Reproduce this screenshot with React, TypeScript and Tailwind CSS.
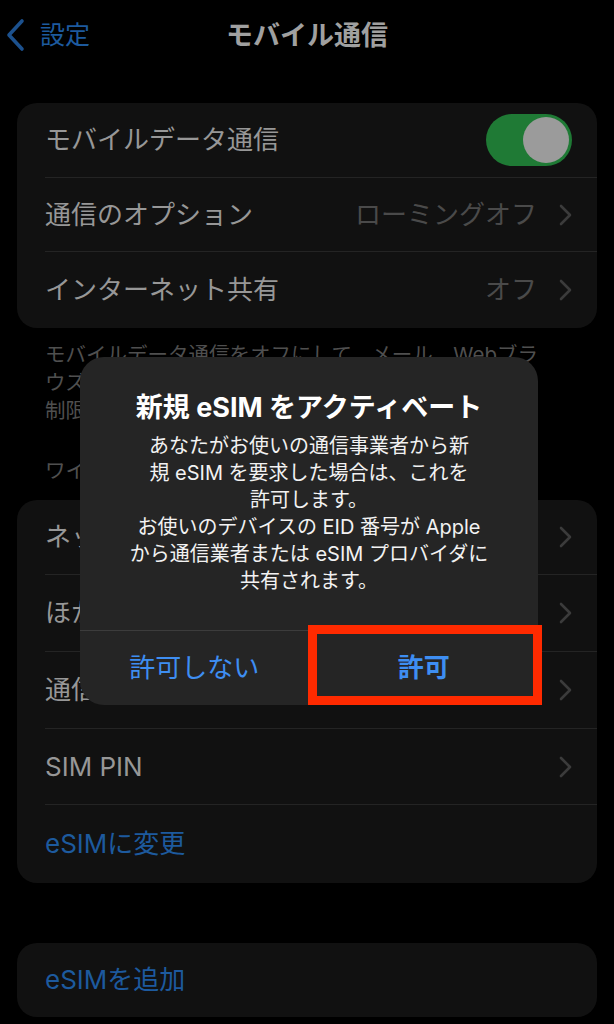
import React from "react";

const font = { fontFamily: 'Inter, "Noto Sans CJK JP", sans-serif' };

function Chevron() {
  return (
    <svg width="13" height="22" viewBox="0 0 13 22" fill="none" className="shrink-0">
      <path d="M2 2l9 9-9 9" stroke="#3b3b3b" strokeWidth="2.6" strokeLinecap="round" strokeLinejoin="round" />
    </svg>
  );
}

function Row({
  label,
  value,
  chevron = true,
  blue = false,
  last = false,
  h = "h-[76px]",
  children,
}: {
  label: string;
  value?: string;
  chevron?: boolean;
  blue?: boolean;
  last?: boolean;
  h?: string;
  children?: React.ReactNode;
}) {
  return (
    <div className={`flex ${h} items-stretch pl-[28px]`}>
      <div className={`flex flex-1 items-center pr-[25px] ${last ? "" : "border-b border-[#242424]"}`}>
        <span className={`flex-1 text-[26px] leading-none ${blue ? "text-[#1d5a9e]" : "text-[#979797]"}`}>{label}</span>
        {value && <span className="mr-[22px] text-[26px] leading-none text-[#4a4a4a]">{value}</span>}
        {children}
        {chevron && !children && !blue && <Chevron />}
      </div>
    </div>
  );
}

export default function App() {
  return (
    <div className="relative min-h-[1024px] w-full overflow-hidden bg-black" style={font}>
      {/* nav */}
      <header className="relative flex h-[70px] items-center">
        <div className="flex items-center pl-[6px]">
          <svg width="20" height="34" viewBox="0 0 20 34" fill="none">
            <path d="M16 3L3 17l13 14" stroke="#1c518e" strokeWidth="3.6" strokeLinecap="round" strokeLinejoin="round" />
          </svg>
          <span className="ml-[14px] text-[25px] leading-none text-[#1d5a9e]">設定</span>
        </div>
        <h1 className="absolute left-1/2 -translate-x-1/2 text-[27px] font-bold leading-none text-[#a0a0a0]">モバイル通信</h1>
      </header>

      <main className="px-[17px]">
        <section className="mt-[33px] overflow-hidden rounded-[20px] bg-[#111111]">
          <Row label="モバイルデータ通信" h="h-[75px]">
            <div className="flex h-[52px] w-[86px] items-center justify-end rounded-full bg-[#1f7a35] pr-[3px]">
              <div className="h-[46px] w-[46px] rounded-full bg-[#9b9b9b]" />
            </div>
          </Row>
          <Row label="通信のオプション" value="ローミングオフ" h="h-[74px]" />
          <Row label="インターネット共有" value="オフ" h="h-[76px]" last />
        </section>

        <p className="px-[28px] pt-[13px] text-[20.5px] leading-[28px] text-[#4f4f4f]">
          モバイルデータ通信をオフにして、メール、Webブラ
          <br />
          ウズ、プッシュ通知などのデータ通信をWi-Fiに
          <br />
          制限します。
        </p>

        <p className="mt-[32px] px-[28px] text-[20.5px] leading-[28px] text-[#4f4f4f]">ワイヤレス通信</p>

        <section className="mt-[15px] overflow-hidden rounded-[20px] bg-[#111111]">
          <Row label="ネットワーク選択" h="h-[75px]" />
          <Row label="ほかのネットワーク" h="h-[77px]" />
          <Row label="通信事業者サービス" h="h-[77px]" />
          <Row label="SIM PIN" h="h-[76px]" />
          <Row label="eSIMに変更" blue last h="h-[78px]" />
        </section>

        <section className="mt-[60px] overflow-hidden rounded-[20px] bg-[#111111]">
          <Row label="eSIMを追加" blue last h="h-[74px]" />
        </section>
      </main>

      {/* alert */}
      <div className="absolute left-[80px] top-[357px] w-[458px] overflow-hidden rounded-[24px] bg-[#252525]">
        <div className="flex h-[273px] flex-col items-center px-[16px] pt-[33px] text-center">
          <h2 className="text-[27px] font-bold leading-[36px] text-white">新規 eSIM をアクティベート</h2>
          <p className="mt-[7px] text-[20px] leading-[27px] text-[#f2f2f2]">
            あなたがお使いの通信事業者から新
            <br />
            規 eSIM を要求した場合は、これを
            <br />
            許可します。
            <br />
            お使いのデバイスの EID 番号が Apple
            <br />
            から通信業者または eSIM プロバイダに
            <br />
            共有されます。
          </p>
        </div>
        <div className="flex h-[75px] border-t border-[#3c3c3c]">
          <div className="flex flex-1 items-center justify-center border-r border-[#3c3c3c] text-[26px] leading-none text-[#3e8ef2]">
            許可しない
          </div>
          <div className="flex flex-1 items-center justify-center text-[26px] font-bold leading-none text-[#3e8ef2]">
            許可
          </div>
        </div>
      </div>

      {/* highlight */}
      <div className="absolute left-[308px] top-[625px] h-[80px] w-[234px] border-[9px] border-[#ff2a00]" />
    </div>
  );
}
